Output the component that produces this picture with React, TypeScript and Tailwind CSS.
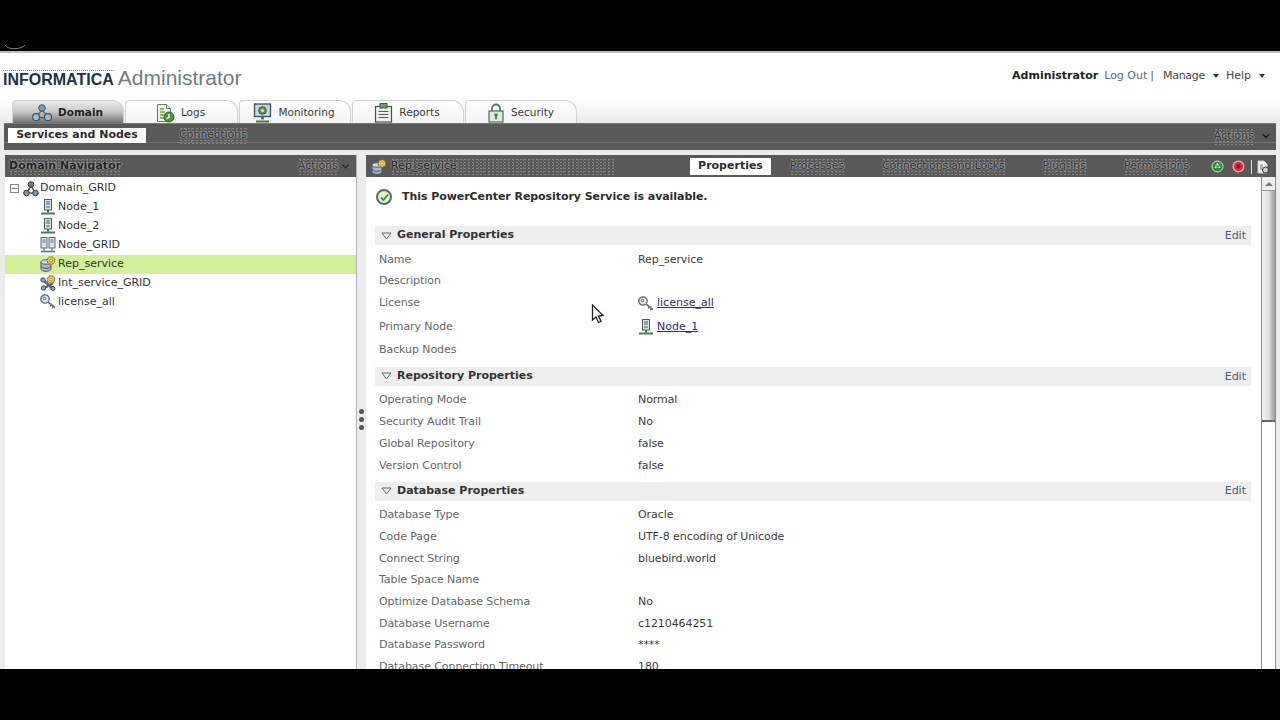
import { ChevronDown } from "lucide-react";

// speckled look of the dark bars in the reference
const noisy =
  "whitespace-nowrap bg-[radial-gradient(#858585_0.7px,transparent_1px),radial-gradient(#7a7a7a_0.6px,transparent_1px)] bg-[length:4px_3px,5px_4px] [text-shadow:0_0_2px_#b4b4b4,1px_0_1px_#989898]";

function NodeIcon() {
  return (
    <svg width="16" height="16" viewBox="0 0 16 16" className="shrink-0">
      <rect x="4.500" y="0.500" width="7" height="10.500" fill="#d9e0e6" stroke="#4e5e68" />
      <path d="M6 3h4M6 5h4" stroke="#4e5e68" />
      <rect x="6" y="7" width="4" height="2" fill="#8fa0ac" />
      <path d="M8 11v2.500" stroke="#3f6f4a" strokeWidth="2" />
      <path d="M1 14.500h14" stroke="#4c7f52" strokeWidth="2" />
    </svg>
  );
}

function GridIcon() {
  return (
    <svg width="16" height="16" viewBox="0 0 16 16" className="shrink-0">
      <rect x="1" y="0.500" width="6" height="10.500" fill="#dde3ea" stroke="#5a6a7a" />
      <rect x="9" y="0.500" width="6" height="10.500" fill="#dde3ea" stroke="#5a6a7a" />
      <path d="M2.500 3h3M10.500 3h3M2.500 5h3M10.500 5h3M4 11v3M12 11v3" stroke="#5a6a7a" />
      <path d="M1 14.500h14" stroke="#5a7f72" strokeWidth="1.600" />
    </svg>
  );
}

function DomainIcon() {
  return (
    <svg width="16" height="16" viewBox="0 0 16 16" className="shrink-0">
      <path d="M8 5 4 11M8 5l4 6M4 12h8" stroke="#555" strokeWidth="1.400" />
      <circle cx="8" cy="3.500" r="2.800" fill="#6f7a86" stroke="#333b44" />
      <circle cx="3.500" cy="12" r="2.800" fill="#87929e" stroke="#333b44" />
      <circle cx="12.500" cy="12" r="2.800" fill="#87929e" stroke="#333b44" />
    </svg>
  );
}

function Gear() {
  return (
    <g>
      <circle cx="11" cy="4.500" r="3.800" fill="#e8c04a" stroke="#7a5c12" strokeDasharray="2 1" />
      <circle cx="11" cy="4.500" r="1.300" fill="#fff8d8" stroke="#8a6c1c" strokeWidth="0.500" />
    </g>
  );
}

function RepIcon() {
  return (
    <svg width="16" height="16" viewBox="0 0 16 16" className="shrink-0">
      <path d="M1 6v7c0 1.200 2.200 2.300 5 2.300s5-1.100 5-2.300V6" fill="#a9bac8" stroke="#4e5a68" />
      <ellipse cx="6" cy="6" rx="5" ry="2.200" fill="#d2dce6" stroke="#4e5a68" />
      <path d="M1 10c0 1.200 2.200 2.300 5 2.300s5-1.100 5-2.300" fill="none" stroke="#4e5a68" />
      <Gear />
    </svg>
  );
}

function IntIcon() {
  return (
    <svg width="16" height="16" viewBox="0 0 16 16" className="shrink-0">
      <path d="M2 4l11 10M13 8 3 14" stroke="#566a7c" strokeWidth="2.600" />
      <circle cx="3" cy="5" r="2.200" fill="#93a6b6" stroke="#3e4c5a" />
      <circle cx="3.500" cy="13" r="2.200" fill="#93a6b6" stroke="#3e4c5a" />
      <circle cx="13" cy="13.500" r="2" fill="#93a6b6" stroke="#3e4c5a" />
      <Gear />
    </svg>
  );
}

function KeyIcon() {
  return (
    <svg width="16" height="16" viewBox="0 0 16 16" className="shrink-0">
      <circle cx="5" cy="5" r="4.200" fill="#dde3e9" stroke="#5f6c78" strokeWidth="1.300" />
      <circle cx="4.500" cy="4.500" r="1.300" fill="#fff" stroke="#5f6c78" />
      <path d="M8 8l7 5.500M11.500 10.800l-1.400 1.700M13.500 12.300l-1.300 1.600" stroke="#6a7884" strokeWidth="1.600" fill="none" />
    </svg>
  );
}

function TabIcon({ name }: { name: string }) {
  if (name === "Domain") {
    return (
      <svg width="22" height="20" viewBox="0 0 24 20">
        <path d="M12 7 6 13M12 7l6 6M6 15h12" stroke="#4e6478" strokeWidth="1.300" />
        <circle cx="12" cy="4.500" r="3.600" fill="#7e9ab2" stroke="#3c5266" />
        <circle cx="5.500" cy="14.500" r="3.800" fill="#a4bace" stroke="#3c5266" strokeWidth="1.300" />
        <circle cx="18.500" cy="14.500" r="3.800" fill="#a4bace" stroke="#3c5266" strokeWidth="1.300" />
      </svg>
    );
  }
  if (name === "Logs") {
    return (
      <svg width="20" height="20" viewBox="0 0 20 20">
        <path d="M1.500 1.500h9l4 4v13h-13z" fill="#eef3e4" stroke="#66727a" />
        <path d="M10.500 1.500v4h4" fill="#dfe6d0" stroke="#66727a" />
        <path d="M4 6h4M4 9h5M4 12h4M4 15h4" stroke="#6d9a50" strokeWidth="1.300" />
        <circle cx="13" cy="14" r="5" fill="#4e9440" stroke="#2d6a2c" />
        <path d="M13 11v3.300l-2.500 1.500" stroke="#fff" strokeWidth="1.300" fill="none" />
      </svg>
    );
  }
  if (name === "Monitoring") {
    return (
      <svg width="20" height="20" viewBox="0 0 20 20">
        <rect x="1.500" y="1" width="16" height="12.500" fill="#c7d5dc" stroke="#37525e" strokeWidth="1.300" />
        <circle cx="9.500" cy="7.500" r="3.800" fill="#5c9a58" stroke="#2c5a34" />
        <circle cx="9.500" cy="7.500" r="1.500" fill="#d8ecd4" />
        <path d="M9.500 13.500v3" stroke="#44606c" strokeWidth="2.500" />
        <path d="M3 18.500h13" stroke="#3c7a46" strokeWidth="2" />
      </svg>
    );
  }
  if (name === "Reports") {
    return (
      <svg width="20" height="20" viewBox="0 0 20 20">
        <rect x="1.500" y="3.500" width="16" height="15.500" fill="#eef0e6" stroke="#3f5258" strokeWidth="1.200" />
        <rect x="6" y="0.500" width="7" height="4.500" fill="#6b9a62" stroke="#3e6048" />
        <path d="M4.500 8.500h10M4.500 11.500h10M4.500 14.500h10" stroke="#44606c" strokeWidth="1.200" />
      </svg>
    );
  }
  return (
    <svg width="20" height="20" viewBox="0 0 20 20">
      <path d="M6 8V5.500a4 4 0 0 1 8 0V8" fill="none" stroke="#5a7a62" strokeWidth="1.800" />
      <rect x="3" y="8" width="14" height="11" fill="#dfeadf" stroke="#4c6c56" strokeWidth="1.200" />
      <circle cx="10" cy="12" r="1.800" fill="#3c7a46" />
      <path d="M10 13v3.500" stroke="#3c7a46" strokeWidth="1.600" />
    </svg>
  );
}

function Tab({ name, active, width }: { name: string; active?: boolean; width: string }) {
  return (
    <div
      className={`flex h-[23px] items-center justify-center gap-[5px] rounded-tl-[4px] rounded-tr-[12px] border border-b-0 border-[#d2d2d2] pr-[2px] pt-[1px] ${width} ${
        active ? "bg-gradient-to-b from-[#ececec] via-[#c6c6c6] to-[#727272]" : "bg-gradient-to-b from-white to-[#f3f3f3]"
      }`}
    >
      <TabIcon name={name} />
      <span className={`text-[10.500px] ${active ? "font-bold text-[#222]" : "text-[#3a3a3a]"}`}>{name}</span>
    </div>
  );
}

const tree = [
  { label: "Node_1", icon: <NodeIcon /> },
  { label: "Node_2", icon: <NodeIcon /> },
  { label: "Node_GRID", icon: <GridIcon /> },
  { label: "Rep_service", icon: <RepIcon />, selected: true },
  { label: "Int_service_GRID", icon: <IntIcon /> },
  { label: "license_all", icon: <KeyIcon /> },
];

function Section({ title }: { title: string }) {
  return (
    <div className="ml-[9px] mr-[10px] flex h-[19px] items-center bg-[#eeeeee] pl-[6px] pr-[5px]">
      <svg width="11" height="8" viewBox="0 0 11 8" className="mr-[5px]">
        <path d="M1 1h9L5.500 7z" fill="none" stroke="#666" />
      </svg>
      <span className="flex-1 text-[11px] font-bold text-[#333]">{title}</span>
      <span className="pt-[1px] text-[11px] text-[#4a5a70]">Edit</span>
    </div>
  );
}

function Row({ label, value, h = "h-[21.700px]", children }: { label: string; value?: string; h?: string; children?: React.ReactNode }) {
  return (
    <div className={`flex items-center text-[11px] ${h}`}>
      <span className="w-[272px] pl-[13px] tracking-[-0.08px] text-[#666]">{label}</span>
      {value ? <span className="tracking-[-0.08px] text-[#3c3c3c]">{value}</span> : children}
    </div>
  );
}

function DocLink({ icon, text }: { icon: React.ReactNode; text: string }) {
  return (
    <span className="flex items-center gap-[3px]">
      {icon}
      <span className="text-[#2c2c80] underline">{text}</span>
    </span>
  );
}

export default function App() {
  return (
    <div className="relative flex h-[720px] w-[1280px] flex-col overflow-hidden bg-black font-['DejaVu_Sans',sans-serif]">
      <div className="h-[51px]" />
      <div className="flex h-[618px] flex-col overflow-hidden bg-white">
        <div className="h-[2px] bg-[#b9bfc4]" />
        <header className="flex h-[47px] items-start justify-between pr-[15px]">
          <div className="flex items-baseline pl-[3px] pt-[14px]">
            <span className="border-t border-dotted border-[#8a949c] font-['Liberation_Sans',sans-serif] text-[16px] font-bold leading-[17px] text-[#1d3346]">
              INFORMATICA
            </span>
            <span className="ml-[4px] font-['Liberation_Sans',sans-serif] text-[21px] leading-[22px] text-[#707a82]">Administrator</span>
          </div>
          <div className="flex items-center pt-[15px] text-[11px]">
            <span className="font-bold text-[#222]">Administrator</span>
            <span className="ml-[6px] text-[#566a80]">Log Out</span>
            <span className="ml-[3px] text-[#566a80]">|</span>
            <span className="ml-[9px] tracking-[-0.3px] text-[#444]">Manage</span>
            <span className="ml-[8px] h-0 w-0 border-x-[3.500px] border-t-[4px] border-x-transparent border-t-[#333]" />
            <span className="ml-[7px] text-[#444]">Help</span>
            <span className="ml-[8px] h-0 w-0 border-x-[3.500px] border-t-[4px] border-x-transparent border-t-[#333]" />
          </div>
        </header>

        <div className="flex h-[23px] gap-[1px] bg-gradient-to-b from-white to-[#e9e9e9] pl-[12px]">
          <Tab name="Domain" active width="w-[112px]" />
          <Tab name="Logs" width="w-[113px]" />
          <Tab name="Monitoring" width="w-[112px]" />
          <Tab name="Reports" width="w-[112px]" />
          <Tab name="Security" width="w-[112px]" />
        </div>

        <div className="bg-[#ececec] px-[4px]">
          <div className="flex h-[27px] items-start justify-between border-t border-[#777] bg-[linear-gradient(#595959_68%,#727272_68%,#727272_73%,#595959_73%)] pl-[4px] pr-[4px] pt-[3px]">
            <div className="flex items-center">
              <span className="flex h-[15px] w-[138px] items-center justify-center bg-white text-[11px] font-bold text-[#2c2c2c]">
                Services and Nodes
              </span>
              <span className={`ml-[33px] text-[11px] text-[#333] ${noisy}`}>Connections</span>
            </div>
            <div className="flex items-center gap-[6px] pt-[1px]">
              <span className={`text-[11px] text-[#333] ${noisy}`}>Actions</span>
              <ChevronDown size={12} strokeWidth={3} className="text-[#222]" />
            </div>
          </div>
        </div>

        <div className="flex min-h-0 flex-1 bg-[#ececec] pl-[5px] pt-[5px]">
          <aside className="flex w-[352px] shrink-0 flex-col border-r border-[#b0b0b0] bg-white">
            <div className="flex h-[22px] shrink-0 items-center justify-between bg-[#595959] pl-[4px] pr-[5px] pt-[1px]">
              <span className={`text-[11px] font-bold text-[#222] ${noisy}`}>Domain Navigator</span>
              <span className="flex items-center gap-[2px]">
                <span className={`text-[11px] text-[#333] ${noisy}`}>Actions</span>
                <ChevronDown size={11} strokeWidth={3} className="text-[#222]" />
              </span>
            </div>
            <div className="pt-[2px] text-[11px] text-[#333]">
              <div className="flex h-[19px] items-center pl-[5px]">
                <span className="mr-[4px] flex h-[9px] w-[9px] items-center justify-center border border-[#888] text-[9px] leading-none text-[#555]">
                  −
                </span>
                <DomainIcon />
                <span className="ml-[1px]">Domain_GRID</span>
              </div>
              {tree.map((item) => (
                <div key={item.label} className={`flex h-[18.900px] items-center gap-[2px] pl-[35px] ${item.selected ? "bg-[#d2f09a]" : ""}`}>
                  {item.icon}
                  <span>{item.label}</span>
                </div>
              ))}
            </div>
          </aside>

          <div className="flex w-[9px] shrink-0 flex-col items-center justify-center gap-[3px] pr-[1px] pt-[14px]">
            <span className="h-[5px] w-[5px] rounded-full bg-[#555]" />
            <span className="h-[5px] w-[5px] rounded-full bg-[#555]" />
            <span className="h-[5px] w-[5px] rounded-full bg-[#555]" />
          </div>

          <main className="flex w-[910px] shrink-0 flex-col">
            <div className="flex h-[22px] shrink-0 items-center bg-[#595959] pl-[5px] pt-[1px] text-[11px]">
              <RepIcon />
              <span className={`ml-[4px] w-[223px] text-[#222] ${noisy}`}>Rep_service</span>
              <span className="ml-[76px] flex h-[17px] w-[81px] shrink-0 items-center justify-center bg-white font-bold text-[#2c2c2c]">Properties</span>
              <span className={`ml-[19px] text-[#333] ${noisy}`}>Processes</span>
              <span className={`ml-[38px] tracking-[-0.2px] text-[#333] ${noisy}`}>Connections and Locks</span>
              <span className={`ml-[38px] text-[#333] ${noisy}`}>Plug-Ins</span>
              <span className={`ml-[38px] text-[#333] ${noisy}`}>Permissions</span>
              <svg width="13" height="13" viewBox="0 0 13 13" className="ml-[22px] shrink-0">
                <circle cx="6.500" cy="6.500" r="5.500" fill="#2f8a3c" stroke="#d8e8d8" />
                <path d="M6.500 2.500 9.500 8h-6z" fill="#d8f0d8" />
                <circle cx="6.500" cy="6.500" r="1.300" fill="#2f8a3c" />
              </svg>
              <svg width="13" height="13" viewBox="0 0 13 13" className="ml-[8px] shrink-0">
                <circle cx="6.500" cy="6.500" r="6" fill="#f0a8a8" />
                <circle cx="6.500" cy="6.500" r="4.500" fill="#d8283a" />
                <circle cx="6.500" cy="6.500" r="2" fill="#8a1c28" />
              </svg>
              <span className="ml-[6px] h-[14px] w-px shrink-0 bg-[#ddd]" />
              <svg width="12" height="14" viewBox="0 0 12 14" className="ml-[5px] shrink-0">
                <path d="M1 1h6l3 3v9H1z" fill="#f2f2f2" stroke="#ccc" />
                <path d="M3 5h3M3 7h3M3 9h2" stroke="#777" />
                <circle cx="8.500" cy="10" r="3" fill="#c4d0da" stroke="#333" />
              </svg>
            </div>

            <div className="flex min-h-0 flex-1">
              <div className="w-[895px] shrink-0 overflow-hidden bg-white">
                <div className="flex h-[41px] items-center pb-[1px] pl-[10px]">
                  <span className="flex h-[16px] w-[16px] items-center justify-center rounded-full border-2 border-[#5a6a62] bg-[#dff0d0]">
                    <svg width="9" height="9" viewBox="0 0 9 9">
                      <path d="M1 4.500 3.500 7 8 1.500" fill="none" stroke="#3a8a3a" strokeWidth="1.800" />
                    </svg>
                  </span>
                  <span className="ml-[10px] text-[11px] font-bold tracking-[-0.06px] text-[#2c2c2c]">
                    This PowerCenter Repository Service is available.
                  </span>
                </div>
                <div className="pt-[8px]">
                  <Section title="General Properties" />
                  <div className="pt-[4px]">
                    <Row label="Name" value="Rep_service" />
                    <Row label="Description" />
                    <Row label="License" h="h-[22.500px]">
                      <DocLink icon={<KeyIcon />} text="license_all" />
                    </Row>
                    <Row label="Primary Node" h="h-[24px]">
                      <DocLink icon={<NodeIcon />} text="Node_1" />
                    </Row>
                    <Row label="Backup Nodes" h="h-[23px]" />
                  </div>
                </div>
                <div className="pt-[5px]">
                  <Section title="Repository Properties" />
                  <div className="pt-[4px]">
                    <Row label="Operating Mode" value="Normal" />
                    <Row label="Security Audit Trail" value="No" />
                    <Row label="Global Repository" value="false" />
                    <Row label="Version Control" value="false" />
                  </div>
                </div>
                <div className="pt-[5px]">
                  <Section title="Database Properties" />
                  <div className="pt-[4px]">
                    <Row label="Database Type" value="Oracle" />
                    <Row label="Code Page" value="UTF-8 encoding of Unicode" />
                    <Row label="Connect String" value="bluebird.world" />
                    <Row label="Table Space Name" />
                    <Row label="Optimize Database Schema" value="No" />
                    <Row label="Database Username" value="c1210464251" />
                    <Row label="Database Password" value="****" />
                    <Row label="Database Connection Timeout" value="180" />
                  </div>
                </div>
              </div>
              <div className="flex w-[15px] shrink-0 flex-col border-x border-[#8c8c8c] bg-white">
                <div className="flex h-[14px] items-center justify-center border-b border-[#999] bg-[#eeeeee]">
                  <span className="h-0 w-0 border-x-[4px] border-b-[4px] border-x-transparent border-b-[#777]" />
                </div>
                <div className="h-[231px] border-b-2 border-[#666] bg-gradient-to-r from-[#f4f4f4] via-[#e2e2e2] to-[#9a9a9a]" />
              </div>
            </div>
          </main>
        </div>
      </div>

      {/* the screen recording's mouse pointer */}
      <svg width="14" height="20" viewBox="0 0 14 20" className="absolute left-[591px] top-[304px]">
        <path d="M1.500 1v15l3.500-3 2.500 5.500 2.500-1-2.500-5.500 4.500-.5z" fill="#fff" stroke="#222" strokeWidth="1.300" />
      </svg>
      {/* bit of desktop arc poking out of the top letterbox */}
      <svg width="30" height="8" viewBox="0 0 30 8" className="absolute left-[1px] top-[44px]">
        <path d="M4 1c3 5 15 5 20 0" fill="none" stroke="#8a8a8a" />
      </svg>
    </div>
  );
}
